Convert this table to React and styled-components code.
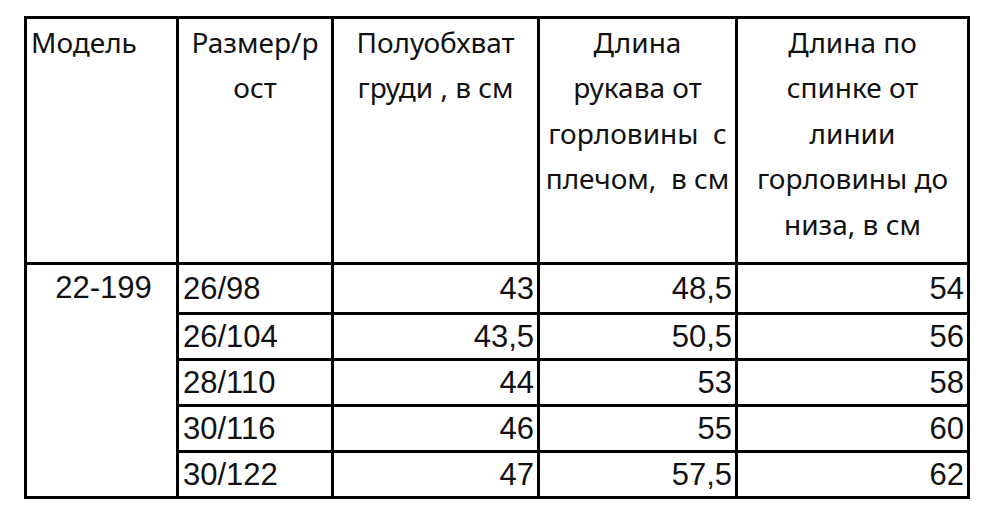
import React from 'react';
import styled, { createGlobalStyle } from 'styled-components';

const GlobalStyle = createGlobalStyle`
  html, body { margin: 0; padding: 0; background: #fff; }
  body { width: 1000px; height: 524px; overflow: hidden; }
`;

const Page = styled.div`
  padding: 15.5px 0 0 24px;
`;

const Grid = styled.div`
  display: grid;
  grid-template-columns: 149px 152px 203px 195px 229px;
  grid-template-rows: 243px 47px 43px 43px 43px 43px;
  gap: 3px;
  padding: 3px;
  width: max-content;
  background: #000;
  color: #111;
`;

const HeadCell = styled.div`
  background: #fff;
  padding: ${props => props.left ? '1px 0 0 4px' : '1px 0 0 0'};
  text-align: ${props => props.left ? 'left' : 'center'};
  font-family: "Noto Sans", "Open Sans", sans-serif;
  font-size: 28px;
  line-height: 45.5px;
  white-space: pre;
`;

const Cell = styled.div`
  background: #fff;
  font-family: "Liberation Sans", Arial, sans-serif;
  font-size: 31px;
  line-height: 34px;
  padding: ${props => props.first ? '7px' : '5px'} 3px 0 4px;
  text-align: ${props => props.num ? 'right' : 'left'};
`;

const ModelCell = styled(Cell)`
  grid-row: span 5;
  text-align: center;
  padding: 6px 0 0 4px;
`;

const headers = [
  { lines: ['Модель'], left: true },
  { lines: ['Размер/р', 'ост'] },
  { lines: ['Полуобхват', 'груди , в см'] },
  { lines: ['Длина', 'рукава от', 'горловины  с', 'плечом,  в см'] },
  { lines: ['Длина по', 'спинке от', 'линии', 'горловины до', 'низа, в см'] },
];

const rows = [
  ['26/98', '43', '48,5', '54'],
  ['26/104', '43,5', '50,5', '56'],
  ['28/110', '44', '53', '58'],
  ['30/116', '46', '55', '60'],
  ['30/122', '47', '57,5', '62'],
];

export default function App() {
  return (
    <>
      <GlobalStyle />
      <Page>
        <Grid>
          {headers.map((h, i) => (
            <HeadCell key={i} left={h.left}>
              {h.lines.join('\n')}
            </HeadCell>
          ))}
          {rows.map((r, ri) => (
            <React.Fragment key={ri}>
              {ri === 0 && <ModelCell>22-199</ModelCell>}
              {r.map((v, ci) => (
                <Cell key={ci} num={ci > 0} first={ri === 0}>
                  {v}
                </Cell>
              ))}
            </React.Fragment>
          ))}
        </Grid>
      </Page>
    </>
  );
}
